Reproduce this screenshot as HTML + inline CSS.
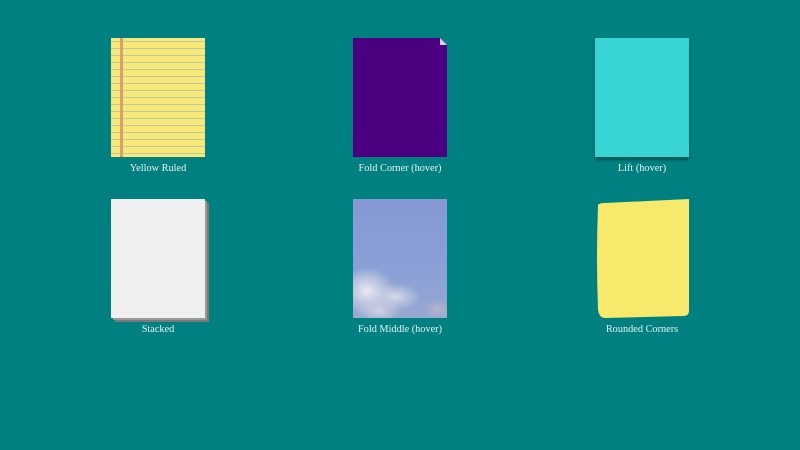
<!DOCTYPE html>
<html><head><style>
html,body{margin:0;width:800px;height:450px;background:#008080;overflow:hidden;font-family:"Liberation Serif",serif;}
.p{position:absolute;width:94px;height:119px;}
.l{position:absolute;width:200px;text-align:center;font-size:10.3px;color:#e6f4f4;}
.y{background-color:#f8e878;background-image:linear-gradient(90deg,transparent 9px,#dca068 9px,#dca068 12px,transparent 12px),repeating-linear-gradient(180deg,#f8e878 0,#f8e878 6px,#b8cca8 6px,#b8cca8 7px);background-position:0 0,0 4px;}
</style></head><body>
<div class="p y" style="left:111px;top:38px"></div>
<div class="l" style="left:58px;top:163px">Yellow Ruled</div>

<div class="p" style="left:353px;top:38px;background:#4b0082"></div>
<div style="position:absolute;left:440px;top:38px;width:0;height:0;border-top:7px solid #008080;border-left:7px solid #d8d0e8"></div>
<div class="l" style="left:300px;top:163px">Fold Corner (hover)</div>

<div class="p" style="left:595px;top:38px;background:#38d4d4;box-shadow:0 3px 3px rgba(0,0,0,.35)"></div>
<div class="l" style="left:542px;top:163px">Lift (hover)</div>

<div class="p" style="left:111px;top:199px;background:#f0f0f0;box-shadow:2px 2px 0 #9a9a9a,4px 4px 0 #7a7a7a"></div>
<div class="l" style="left:58px;top:324px">Stacked</div>

<div class="p" style="left:353px;top:199px;background:radial-gradient(ellipse 28px 24px at 14px 92px,rgba(238,238,242,.95),rgba(205,210,228,.6) 60%,transparent 100%),radial-gradient(ellipse 26px 14px at 42px 98px,rgba(225,226,236,.85),transparent),radial-gradient(ellipse 22px 12px at 26px 112px,rgba(218,218,228,.85),transparent),radial-gradient(ellipse 14px 10px at 85px 110px,rgba(200,190,200,.6),transparent),linear-gradient(180deg,#8698d4,#8aa0d6 60%,#98a8d0)"></div>
<div class="l" style="left:300px;top:324px">Fold Middle (hover)</div>

<svg style="position:absolute;left:595px;top:199px" width="94" height="119"><path d="M3,6 Q4,4 10,4 L94,0 L94,112 Q94,117 88,117 L10,119 Q4,119 3,110 Q1,60 3,6 Z" fill="#f7e96b"/></svg>
<div class="l" style="left:542px;top:324px">Rounded Corners</div>
</body></html>
